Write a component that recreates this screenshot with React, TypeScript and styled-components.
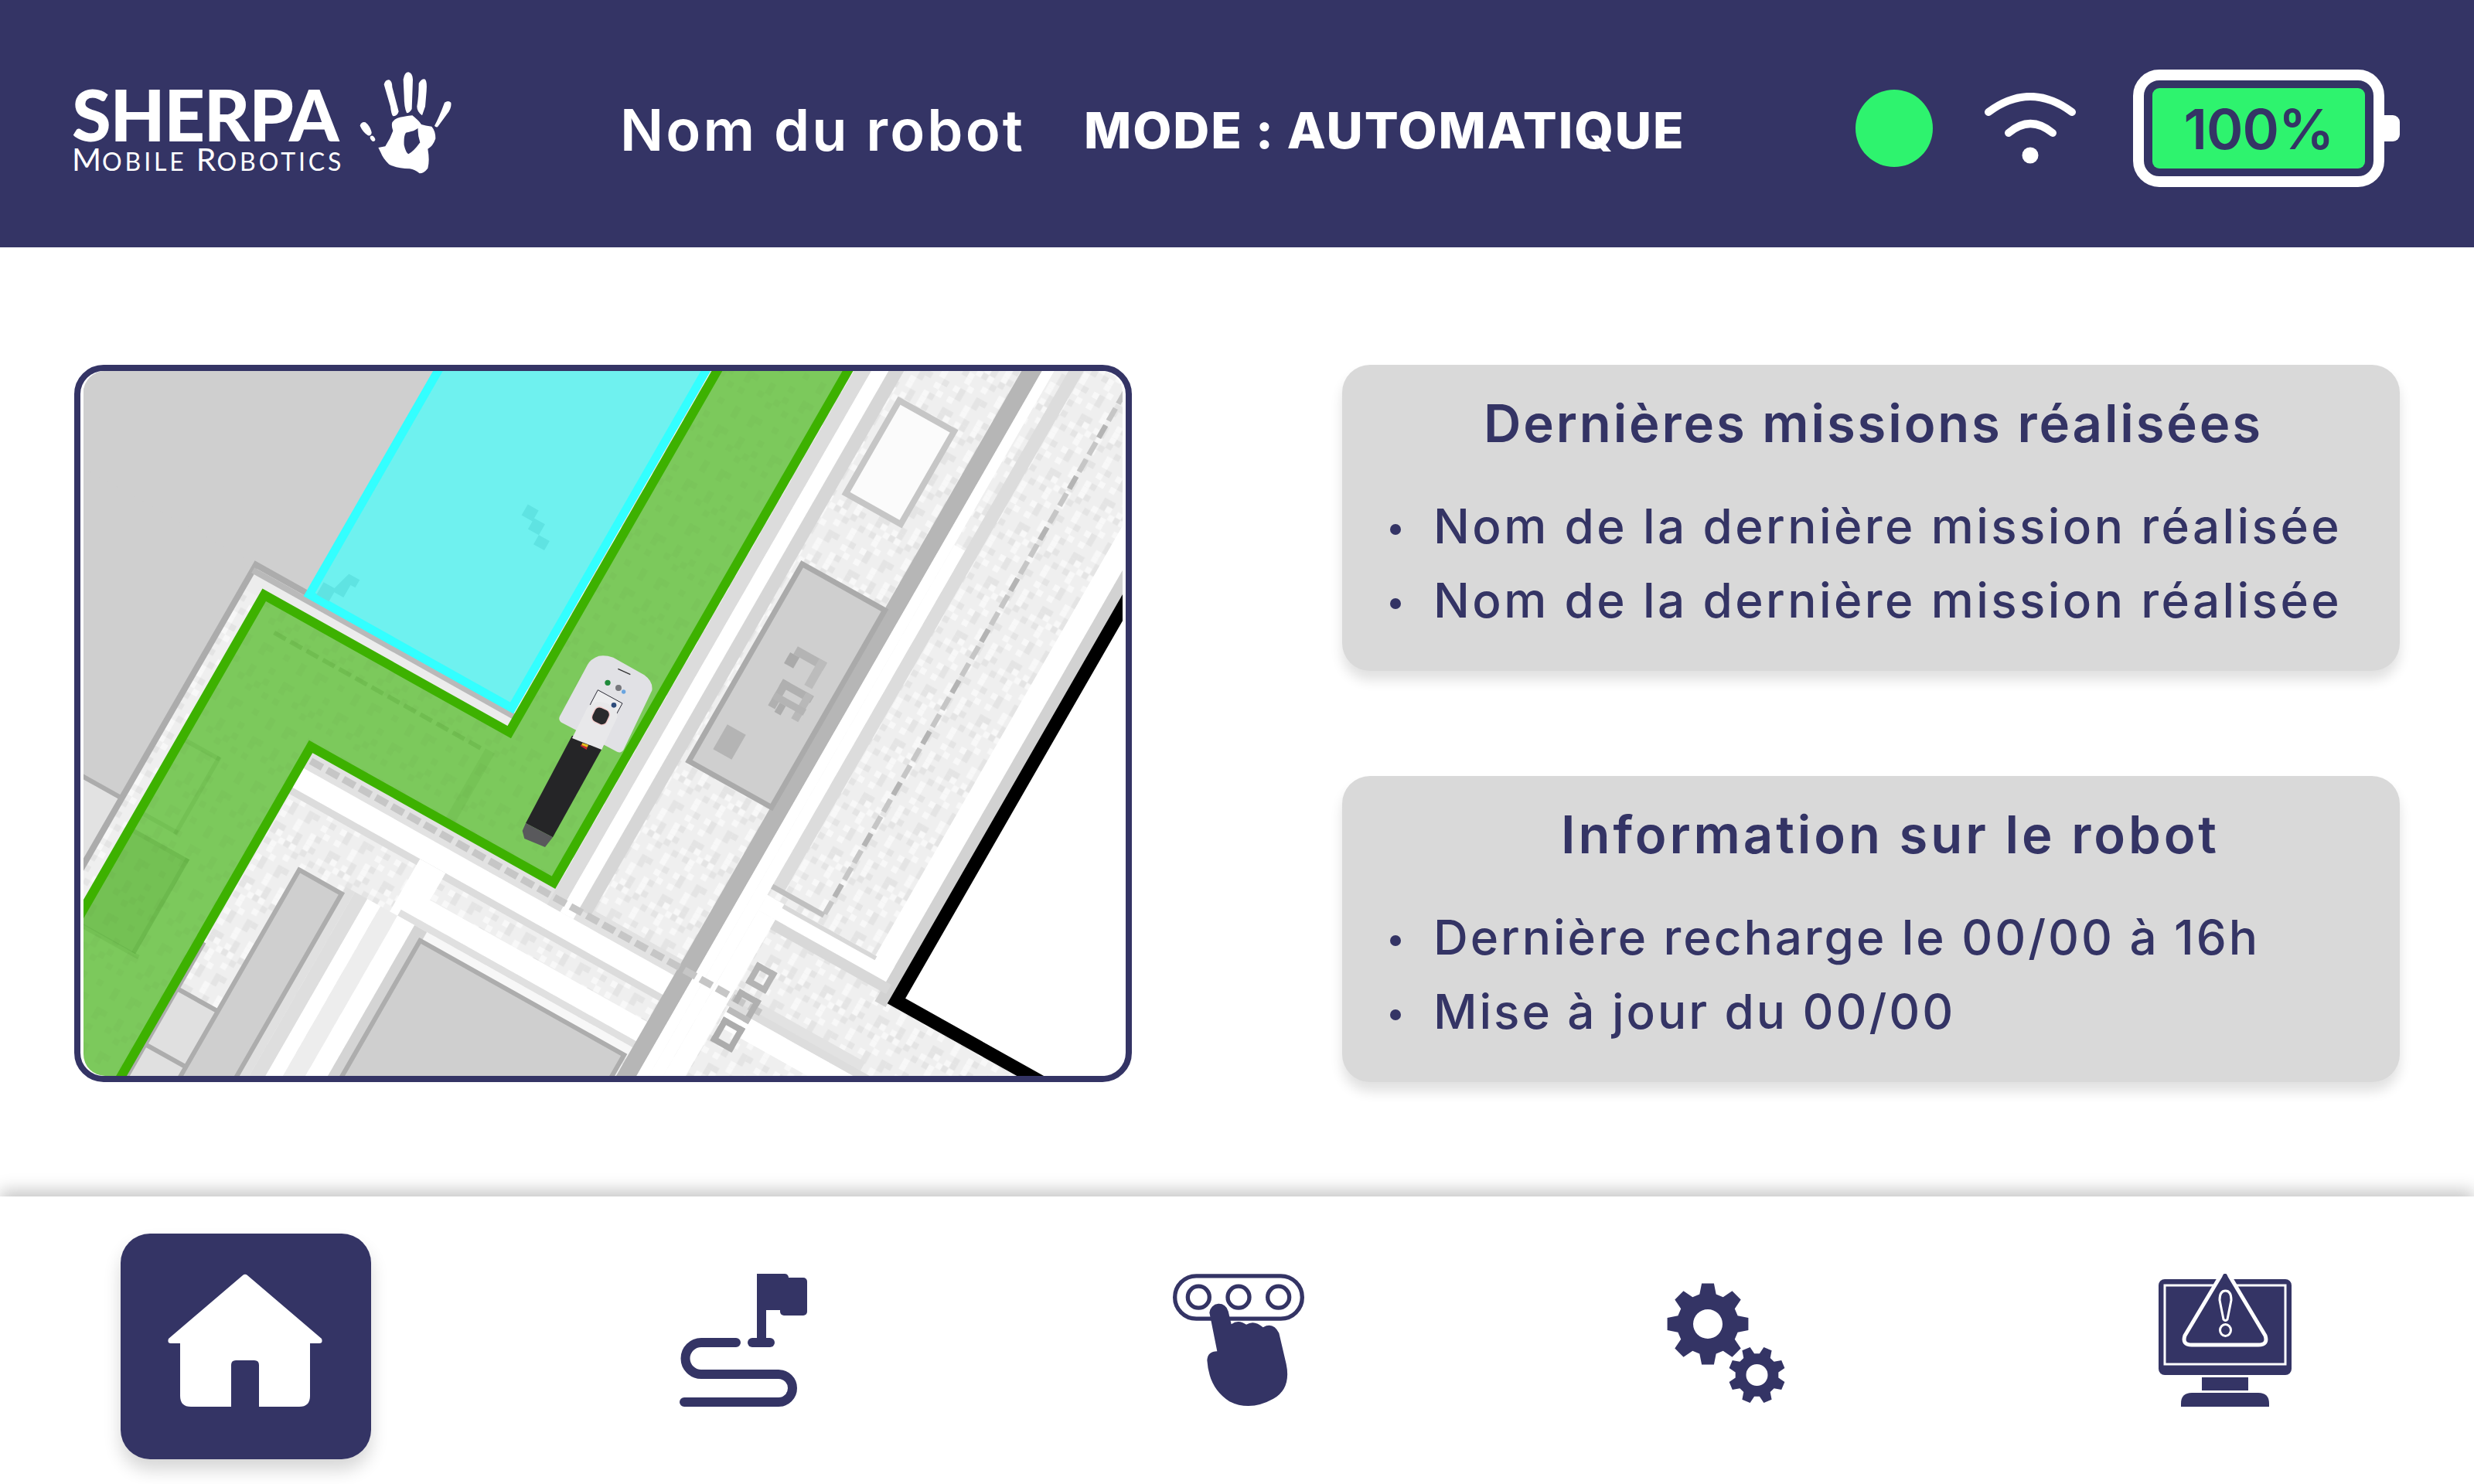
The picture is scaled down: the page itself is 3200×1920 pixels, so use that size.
import styled, { createGlobalStyle } from 'styled-components'

const NAVY = '#343465'
const BRIGHT = '#2ef36e'

const GlobalStyle = createGlobalStyle`
  html, body {
    margin: 0;
    padding: 0;
    background: #fff;
  }
`

const Page = styled.div`
  width: 3200px;
  height: 1920px;
  display: flex;
  flex-direction: column;
  overflow: hidden;
  font-family: Inter, 'Liberation Sans', sans-serif;
  color: ${NAVY};
`

const Header = styled.header`
  height: 320px;
  box-sizing: border-box;
  flex: none;
  display: flex;
  align-items: center;
  padding: 12px 96px 0;
  background: ${NAVY};
  color: #fff;
`

const Logo = styled.div`
  width: 709px;
  flex: none;
  display: flex;
  align-items: flex-end;
  margin: -30px 0 0 -3px;
`

const LogoWords = styled.div`
  width: 344px;
  display: flex;
  flex-direction: column;
  font-family: Lato, 'Liberation Sans', sans-serif;
`

const LogoName = styled.div`
  font-size: 92px;
  line-height: 76px;
  height: 76px;
  font-weight: 900;
  letter-spacing: -1.3px;
  white-space: nowrap;
`

const LogoTagline = styled.div`
  font-size: 32px;
  line-height: 32px;
  height: 32px;
  margin-top: 4px;
  letter-spacing: 3.9px;
  white-space: nowrap;

  b {
    font-weight: 400;
    font-size: 41px;
    letter-spacing: 1px;
  }
`

const HandMark = styled.svg`
  width: 150px;
  height: 155px;
  flex: none;
  margin: 0 0 -14px 13px;
`

const RobotName = styled.div`
  width: 600px;
  flex: none;
  margin-top: 3px;
  font-size: 74px;
  font-weight: 600;
  letter-spacing: 3.1px;
  white-space: nowrap;
`

const ModeLabel = styled.div`
  margin-top: 4px;
  font-size: 65px;
  font-weight: 800;
  letter-spacing: 1.9px;
  white-space: nowrap;
`

const Status = styled.div`
  margin-left: auto;
  display: flex;
  align-items: center;
`

const LinkDot = styled.div`
  width: 100px;
  height: 100px;
  border-radius: 50%;
  background: ${BRIGHT};
`

const WifiIcon = styled.svg`
  width: 118px;
  height: 92px;
  margin: 0 74px 0 67px;
`

const Battery = styled.div`
  display: flex;
  align-items: center;
`

const BatteryShell = styled.div`
  width: 325px;
  height: 152px;
  box-sizing: border-box;
  padding: 10px 11px;
  border: 14px solid #fff;
  border-radius: 34px;
`

const BatteryLevel = styled.div`
  height: 100%;
  display: flex;
  align-items: center;
  justify-content: center;
  background: ${BRIGHT};
  border-radius: 9px;
  color: ${NAVY};
  font-size: 72px;
  font-weight: 600;
  letter-spacing: -1px;
`

const BatteryTip = styled.div`
  width: 20px;
  height: 34px;
  background: #fff;
  border-radius: 0 9px 9px 0;
`

const Main = styled.main`
  flex: 1;
  display: grid;
  grid-template-columns: 1368px 1368px;
  column-gap: 272px;
  padding: 152px 96px 0;
  align-items: start;
`

const MapFrame = styled.div`
  height: 928px;
  box-sizing: border-box;
  border: 8px solid ${NAVY};
  border-radius: 38px;
  padding: 0 4px;
  background: #fff;
`

const MapDrawing = styled.svg`
  display: block;
  width: 1344px;
  height: 912px;
  border-radius: 28px;
`

const Cards = styled.div`
  display: flex;
  flex-direction: column;
  gap: 136px;
`

const Card = styled.section`
  height: 396px;
  box-sizing: border-box;
  padding: 34px 62px 0;
  background: #d9d9d9;
  border-radius: 36px;
  box-shadow: 0 12px 16px rgba(0, 0, 0, 0.12);
`

const CardTitle = styled.h2<{ $inset: number; $spacing: number }>`
  margin: 0;
  padding-left: ${p => p.$inset}px;
  font-size: 67px;
  line-height: 84px;
  font-weight: 600;
  letter-spacing: ${p => p.$spacing}px;
  text-align: center;
  white-space: nowrap;
`

const CardList = styled.ul<{ $spacing: number }>`
  list-style: none;
  margin: 42px 0 0;
  padding: 0;
  letter-spacing: ${p => p.$spacing}px;
`

const CardItem = styled.li`
  display: flex;
  align-items: center;
  gap: 42px;
  height: 96px;
  font-size: 62px;
  font-weight: 500;
  white-space: nowrap;

  &::before {
    content: '';
    width: 14px;
    height: 14px;
    flex: none;
    border-radius: 50%;
    background: ${NAVY};
    transform: translateY(5px);
  }
`

const Footer = styled.nav`
  height: 372px;
  box-sizing: border-box;
  flex: none;
  display: grid;
  grid-template-columns: repeat(5, 640px);
  padding-top: 48px;
  background: #fff;
  box-shadow: 0 -8px 20px rgba(0, 0, 0, 0.22);
  position: relative;
`

const NavCell = styled.div`
  display: flex;
  justify-content: center;
`

const HomeButton = styled.div`
  width: 324px;
  height: 292px;
  margin-left: -4px;
  display: flex;
  align-items: flex-start;
  justify-content: center;
  padding: 52px 2px 0 0;
  box-sizing: border-box;
  background: ${NAVY};
  border-radius: 38px;
  box-shadow: 0 14px 22px rgba(0, 0, 0, 0.16);
`

const NavIcon = styled.svg<{ $w: number; $shift?: number }>`
  width: ${p => p.$w}px;
  height: 172px;
  flex: none;
  margin-top: 52px;
  margin-left: ${p => p.$shift ?? 0}px;
`

const HouseIcon = styled.svg`
  width: 200px;
  height: 172px;
  display: block;
`

// one cell of the dithered floor texture, same seed every render
const ditherCells = (() => {
  const out: { x: number; y: number; k: number }[] = []
  let seed = 37
  for (let y = 0; y < 10; y++) {
    for (let x = 0; x < 10; x++) {
      seed = (seed * 73 + 41) % 257
      out.push({ x: x * 7, y: y * 7, k: seed % 5 })
    }
  }
  return out
})()

type Band = [number, number, number, number, string]

// [a, b, width, height, fill], in the tilted coordinates of the map
const floorBands: Band[] = [
  // grey block top left
  [-900, -1000, 744, 1154, '#cfcfcf'],
  [-900, -1000, 813, 852, '#cfcfcf'],
  [-156, -148, 25, 30, '#ececec'],
  [-156, -148, 343, 25, '#ececec'],
  [-900, 154, 744, 800, '#e2e2e2'],
  // street under the green path
  [0, 5, 720, 20, '#e2e2e2'],
  [0, 25, 500, 25, '#fff'],
  [555, 25, 400, 25, '#fff'],
  [0, 50, 500, 8, '#dcdcdc'],
  [170, 50, 33, 80, '#fff'],
  [180, 85, 310, 25, '#fff'],
  [180, 110, 310, 8, '#e0e0e0'],
  [180, 118, 310, 12, '#f7f7f7'],
  // strip beside the green path
  [320, -1100, 17, 1125, '#dcdcdc'],
  [337, -1100, 17, 1125, '#fff'],
  [354, -1100, 15, 1112, '#d6d6d6'],
  [369, -1100, 115, 8, '#e4e4e4'],
  // lower left columns
  [113, 118, 12, 800, '#e0e0e0'],
  [125, 118, 16, 800, '#dedede'],
  [141, 118, 17, 800, '#fff'],
  [158, 118, 22, 800, '#ededed'],
  [180, 118, 22, 800, '#fff'],
  [202, 118, 16, 800, '#d4d4d4'],
  [0, 310, 58, 600, '#e0e0e0'],
  // tall grey divider and white street
  [484, -1100, 20, 1900, '#b6b6b6'],
  [504, -1100, 12, 1900, '#fff'],
  [516, -550, 14, 1400, '#fff'],
  [530, -1100, 15, 984, '#dcdcdc'],
  // right street along the wall
  [670, -1100, 25, 1015, '#fff'],
  [695, -1100, 14, 1040, '#d2d2d2'],
  [530, -105, 165, 20, '#fff'],
  [530, -85, 22, 900, '#fff'],
  [552, -85, 150, 12, '#d8d8d8'],
  [552, -105, 120, 5, '#d8d8d8'],
  [552, 16, 400, 9, '#dddddd'],
]

// [a, b, width, height, fill] small marks of the scanned floor plan
const floorMarks: Band[] = [
  // blurred room label
  [420, -365, 38, 10, '#b4b4b4'], [448, -365, 10, 34, '#bcbcbc'], [416, -355, 12, 14, '#aaa'],
  [424, -325, 40, 9, '#b0b0b0'], [424, -325, 9, 34, '#b0b0b0'], [454, -325, 9, 34, '#b8b8b8'],
  [424, -308, 40, 8, '#b4b4b4'], [434, -300, 8, 12, '#acacac'],
  [395, -250, 24, 32, '#b4b4b4'],
  // blurred aisle label
  [558, -34, 26, 7, '#b4b4b4'], [558, -34, 7, 26, '#b4b4b4'], [577, -34, 7, 26, '#b4b4b4'], [558, -14, 26, 7, '#b4b4b4'],
  [556, 2, 28, 7, '#b0b0b0'], [556, 2, 7, 16, '#b0b0b0'], [577, 2, 7, 30, '#b0b0b0'], [556, 25, 28, 7, '#bababa'],
  [556, 38, 28, 7, '#acacac'], [556, 38, 7, 30, '#acacac'], [577, 38, 7, 30, '#acacac'], [556, 62, 28, 7, '#acacac'],
]

// [a, b, width, height, shade] darker shapes showing through the green path
const greenShades: [number, number, number, number, number][] = [
  [-135, 177, 80, 122, 0.08],
  [172, -94, 12, 94, 0.06],
  [-131, 60, 49, 5, 0.08],
  [-86, 60, 5, 100, 0.08],
  [-131, 155, 49, 5, 0.08],
  [-135, 298, 85, 5, 0.08],
  [-60, 177, 5, 122, 0.08],
  [-135, 177, 80, 5, 0.06],
]

const dashes = Array.from({ length: 34 }, (_, i) => -860 + i * 22)
const streetDashes = Array.from({ length: 28 }, (_, i) => 8 + i * 21)
const greenDashes = Array.from({ length: 13 }, (_, i) => -100 + i * 21)

const FloorMap = () => (
  <MapDrawing viewBox="108 480 1344 912">
    <defs>
      <pattern id="dither" width="70" height="70" patternUnits="userSpaceOnUse">
        <rect width="70" height="70" fill="#efefef" />
        {ditherCells.filter(c => c.k < 2).map(c => (
          <rect key={`${c.x}-${c.y}`} x={c.x} y={c.y} width="7" height="7" fill={c.k === 0 ? '#f8f8f8' : '#e4e4e4'} />
        ))}
      </pattern>
      <pattern id="greenDither" width="70" height="70" patternUnits="userSpaceOnUse">
        {ditherCells.filter(c => c.k === 1).map(c => (
          <rect key={`${c.x}-${c.y}`} x={c.x} y={c.y} width="7" height="7" fill="#000" fillOpacity="0.018" />
        ))}
      </pattern>
    </defs>

    <rect x="108" y="480" width="1344" height="912" fill="#fff" />

    <g transform="matrix(1 .56 -.575 1 402 966)">
      <rect x="-900" y="-1100" width="2000" height="2200" fill="url(#dither)" />

      {floorBands.map(([a, b, w, h, fill], i) => (
        <rect key={i} x={a} y={b} width={w} height={h} fill={fill} />
      ))}

      {/* outline of the grey block */}
      <path d="M-156 900V-148H-87" fill="none" stroke="#acacac" strokeWidth="8" vectorEffect="non-scaling-stroke" />
      <path d="M-156 -141H190" fill="none" stroke="#b9b9b9" strokeWidth="8" vectorEffect="non-scaling-stroke" />
      <path d="M-900 154H-156" fill="none" stroke="#acacac" strokeWidth="6" vectorEffect="non-scaling-stroke" />

      {/* outlined rooms */}
      <rect x="381" y="-661" width="71" height="120" fill="#fbfbfb" stroke="#c6c6c6" strokeWidth="8" vectorEffect="non-scaling-stroke" />
      <rect x="378" y="-448" width="107" height="255" fill="#cfcfcf" stroke="#aaa" strokeWidth="7" vectorEffect="non-scaling-stroke" />
      <rect x="58" y="127" width="55" height="900" fill="#cfcfcf" stroke="#adadad" strokeWidth="6" vectorEffect="non-scaling-stroke" />
      <rect x="216" y="130" width="264" height="900" fill="#cfcfcf" stroke="#adadad" strokeWidth="6" vectorEffect="non-scaling-stroke" />
      <path d="M6 310H58M6 382H58" stroke="#adadad" strokeWidth="6" vectorEffect="non-scaling-stroke" />
      <path d="M6 250V900" stroke="#adadad" strokeWidth="5" vectorEffect="non-scaling-stroke" />

      {/* dashed line on the right */}
      {dashes.map(b => (
        <rect key={b} x="594" y={b} width="6" height="16" fill={b % 3 === 0 ? '#b4b4b4' : '#c6c6c6'} />
      ))}
      <path d="M530 -116H597" stroke="#c0c0c0" strokeWidth="7" vectorEffect="non-scaling-stroke" />

      {streetDashes.map(a => (
        <rect key={a} x={a} y="10" width="15" height="8" fill="#c6c6c6" />
      ))}

      {floorMarks.map(([a, b, w, h, fill], i) => (
        <rect key={i} x={a} y={b} width={w} height={h} fill={fill} />
      ))}

      {/* walled off zone */}
      <path d="M716 -1100V-72H1100V-1100Z" fill="#fff" stroke="#000" strokeWidth="17" vectorEffect="non-scaling-stroke" />

      {/* cyan zone */}
      <rect x="-87" y="-1000" width="262" height="852" fill="#6ff1ef" stroke="#33ffff" strokeWidth="11" vectorEffect="non-scaling-stroke" />
      <path d="M76 -356h14v10h14v14h14v12h-14v-12h-14v-10h-14zM-60 -190h14v10h-6v16h-12v12h-16v-16h14z" fill="#5fe3e2" />

      {/* green path */}
      <path d="M186 -1000H314V0H0V900H-131V-123H186Z" fill="#7cc95c" />
      <path d="M186 -1000H314V0H0V900H-131V-123H186Z" fill="url(#greenDither)" />
      {greenShades.map(([a, b, w, h, o], i) => (
        <rect key={i} x={a} y={b} width={w} height={h} fill="#1f6b00" fillOpacity={o} />
      ))}
      {greenDashes.map(a => (
        <rect key={a} x={a} y="-94" width="15" height="5" fill="#1f6b00" fillOpacity="0.12" />
      ))}
      <path d="M186 -1000V-123H-131V900M0 900V0H314V-1000" fill="none" stroke="#3db100" strokeWidth="12" vectorEffect="non-scaling-stroke" />
    </g>

    {/* robot */}
    <g transform="translate(660 830) scale(.3333)">
      <path d="M240 365L365 400L165 760L60 705Z" fill="#252527" />
      <path d="M60 705L165 760L135 798L55 765L47 735Z" fill="#59595c" />
      <path d="M330 62Q355 48 400 62L520 130Q555 155 550 190L440 420Q430 435 415 428L200 315Q185 305 192 290L300 90Q310 72 330 62Z" fill="#e1e1e5" />
      <path d="M340 188L435 240L405 295L310 245Z" fill="#ececee" stroke="#2a2a35" strokeWidth="3" />
      <path d="M300 255Q330 225 375 240Q418 258 415 295L355 420L240 375Z" fill="#e8e8ea" />
      <path d="M272 405L280 395L302 402L296 420Z" fill="#c1272d" />
      <path d="M280 394L303 401L299 410L277 402Z" fill="#e6c01e" />
      <rect x="318" y="256" width="66" height="66" rx="22" fill="#f3c9c9" transform="rotate(25 351 289)" />
      <rect x="322" y="260" width="58" height="58" rx="18" fill="#2a2a2c" transform="rotate(25 351 289)" />
      <path d="M418 106L466 128" stroke="#333" strokeWidth="4" />
      <circle cx="378" cy="160" r="11" fill="#1f8a3a" />
      <circle cx="420" cy="180" r="12" fill="#77777c" />
      <circle cx="440" cy="195" r="8" fill="#6aa5e0" />
      <circle cx="402" cy="247" r="10" fill="#2c4a7a" />
    </g>
  </MapDrawing>
)

const Hand = () => (
  <HandMark viewBox="0 0 450 465" fill="#fff">
    <path d="M140 85Q145 65 160 67Q172 72 172 95L197 190Q192 208 175 208Q168 200 165 170Q150 120 140 85Z" />
    <path d="M215 65Q220 37 235 37Q250 40 252 65L248 180Q238 198 228 195Q218 175 218 130Z" />
    <path d="M275 80Q288 60 300 65Q308 75 305 110L300 170L288 205Q268 190 268 170Q275 130 275 80Z" />
    <path d="M375 155Q390 145 400 155Q403 170 392 190L348 250Q340 252 336 245Q355 210 375 155Z" />
    <path d="M47 245Q52 228 68 232Q85 245 92 270Q92 285 78 283Q58 270 47 245Z" />
    <ellipse cx="96" cy="295" rx="8" ry="12" transform="rotate(-35 96 295)" />
    <path
      fillRule="evenodd"
      d="M172 232Q185 212 215 210Q240 205 250 205Q275 225 285 240Q300 245 325 248Q340 265 340 295Q330 325 310 335Q318 380 310 410Q295 430 278 430Q260 415 240 412Q190 410 160 395Q135 370 128 350L118 330L145 325Q165 295 175 265Q168 245 172 232ZM225 272Q216 285 218 320Q225 350 235 355Q255 345 280 310Q270 280 272 255L255 265Q235 270 225 272Z"
    />
  </HandMark>
)

const gearPath = (cx: number, cy: number, outer: number, root: number, hole: number, turn: number) => {
  const pts: string[] = []
  const teeth = 8
  for (let i = 0; i < teeth; i++) {
    const mid = turn + (i * Math.PI * 2) / teeth - Math.PI / 2
    const offsets: [number, number][] = [
      [-0.27, root],
      [-0.15, outer],
      [0.15, outer],
      [0.27, root],
    ]
    offsets.forEach(([d, r]) => {
      pts.push(`${(cx + Math.cos(mid + d) * r).toFixed(1)} ${(cy + Math.sin(mid + d) * r).toFixed(1)}`)
    })
  }
  return `M${pts.join('L')}ZM${cx - hole} ${cy}a${hole} ${hole} 0 1 0 ${hole * 2} 0a${hole} ${hole} 0 1 0 ${-hole * 2} 0Z`
}

const App = () => {
  return (
    <Page>
      <GlobalStyle />
      <Header>
        <Logo>
          <LogoWords>
            <LogoName>SHERPA</LogoName>
            <LogoTagline><b>M</b>OBILE <b>R</b>OBOTICS</LogoTagline>
          </LogoWords>
          <Hand />
        </Logo>
        <RobotName>Nom du robot</RobotName>
        <ModeLabel>MODE : AUTOMATIQUE</ModeLabel>
        <Status>
          <LinkDot />
          <WifiIcon viewBox="0 0 118 92" fill="none" stroke="#fff" strokeWidth="10" strokeLinecap="round">
            <path d="M5 25Q59 -15 113 25" />
            <path d="M31 52Q59 28 88 52" />
            <circle cx="59" cy="81" r="10.5" fill="#fff" stroke="none" />
          </WifiIcon>
          <Battery>
            <BatteryShell>
              <BatteryLevel>100%</BatteryLevel>
            </BatteryShell>
            <BatteryTip />
          </Battery>
        </Status>
      </Header>

      <Main>
        <MapFrame>
          <FloorMap />
        </MapFrame>
        <Cards>
          <Card>
            <CardTitle $inset={6} $spacing={2.85}>Dernières missions réalisées</CardTitle>
            <CardList $spacing={3.4}>
              <CardItem>Nom de la dernière mission réalisée</CardItem>
              <CardItem>Nom de la dernière mission réalisée</CardItem>
            </CardList>
          </Card>
          <Card>
            <CardTitle $inset={50} $spacing={3.9}>Information sur le robot</CardTitle>
            <CardList $spacing={2.95}>
              <CardItem>Dernière recharge le 00/00 à 16h</CardItem>
              <CardItem>Mise à jour du 00/00</CardItem>
            </CardList>
          </Card>
        </Cards>
      </Main>

      <Footer>
        <NavCell>
          <HomeButton>
            <HouseIcon viewBox="0 0 200 172" fill="#fff">
              <path d="M97 2a4 4 0 0 1 6 0L199 84q2 6 -3 6H184V158q0 14 -14 14H118V118q0 -6 -6 -6H88q-6 0 -6 6V172H30q-14 0 -14 -14V90H4q-5 0 -3 -6Z" />
            </HouseIcon>
          </HomeButton>
        </NavCell>
        <NavCell>
          <NavIcon $w={165} $shift={3} viewBox="0 0 165 172" fill={NAVY}>
            <rect x="100" y="0" width="41" height="47" rx="5" />
            <rect x="130" y="5" width="35" height="49" rx="5" />
            <rect x="100" y="0" width="12" height="86" />
            <rect x="88" y="83" width="35" height="12" rx="6" />
            <path d="M73 89H28a20.500 20.500 0 0 0 0 41H128a18 18 0 0 1 0 36H6" fill="none" stroke={NAVY} strokeWidth="12" strokeLinecap="round" />
          </NavIcon>
        </NavCell>
        <NavCell>
          <NavIcon $w={170} $shift={4} viewBox="200 145 510 515">
            <rect x="208" y="153" width="494" height="166" rx="83" fill="none" stroke={NAVY} strokeWidth="16" />
            <circle cx="300" cy="235" r="42" fill="none" stroke={NAVY} strokeWidth="16" />
            <circle cx="455" cy="235" r="42" fill="none" stroke={NAVY} strokeWidth="16" />
            <circle cx="610" cy="235" r="42" fill="none" stroke={NAVY} strokeWidth="16" />
            <path d="M342 295A37 37 0 0 1 415 290L427 340Q455 320 485 342Q515 322 550 352Q590 330 612 375L640 495Q660 590 590 630Q500 680 420 640Q340 590 333 480Q335 445 372 445Z" fill={NAVY} />
          </NavIcon>
        </NavCell>
        <NavCell>
          <NavIcon $w={153} $shift={-15} viewBox="2156 1648 153 172" fill={NAVY}>
            <path fillRule="evenodd" d={gearPath(2209, 1713, 53, 40, 19, 0)} />
            <path fillRule="evenodd" d={gearPath(2272.500, 1779, 37, 28, 14, Math.PI / 8)} />
          </NavIcon>
        </NavCell>
        <NavCell>
          <NavIcon $w={172} $shift={-4} viewBox="0 0 172 172" fill={NAVY}>
            <rect x="0" y="7" width="172" height="124" rx="8" />
            <rect x="8" y="15" width="156" height="102" fill="none" stroke="#fff" strokeWidth="3" />
            <path d="M86 -3Q82 -3 80 3L34 80Q30 92 43 92H129Q142 92 138 80L92 3Q90 -3 86 -3Z" stroke="#fff" strokeWidth="5" />
            <path d="M86.500 22Q79 22 79 34L84 59Q86.500 62 89 59L94 34Q94 22 86.500 22Z" stroke="#fff" strokeWidth="3" />
            <ellipse cx="86.500" cy="73" rx="7" ry="7.500" stroke="#fff" strokeWidth="3" />
            <rect x="56" y="134" width="60" height="17" />
            <path d="M29 172V168Q29 154 43 154H129Q143 154 143 168V172Z" />
          </NavIcon>
        </NavCell>
      </Footer>
    </Page>
  )
}

export default App
